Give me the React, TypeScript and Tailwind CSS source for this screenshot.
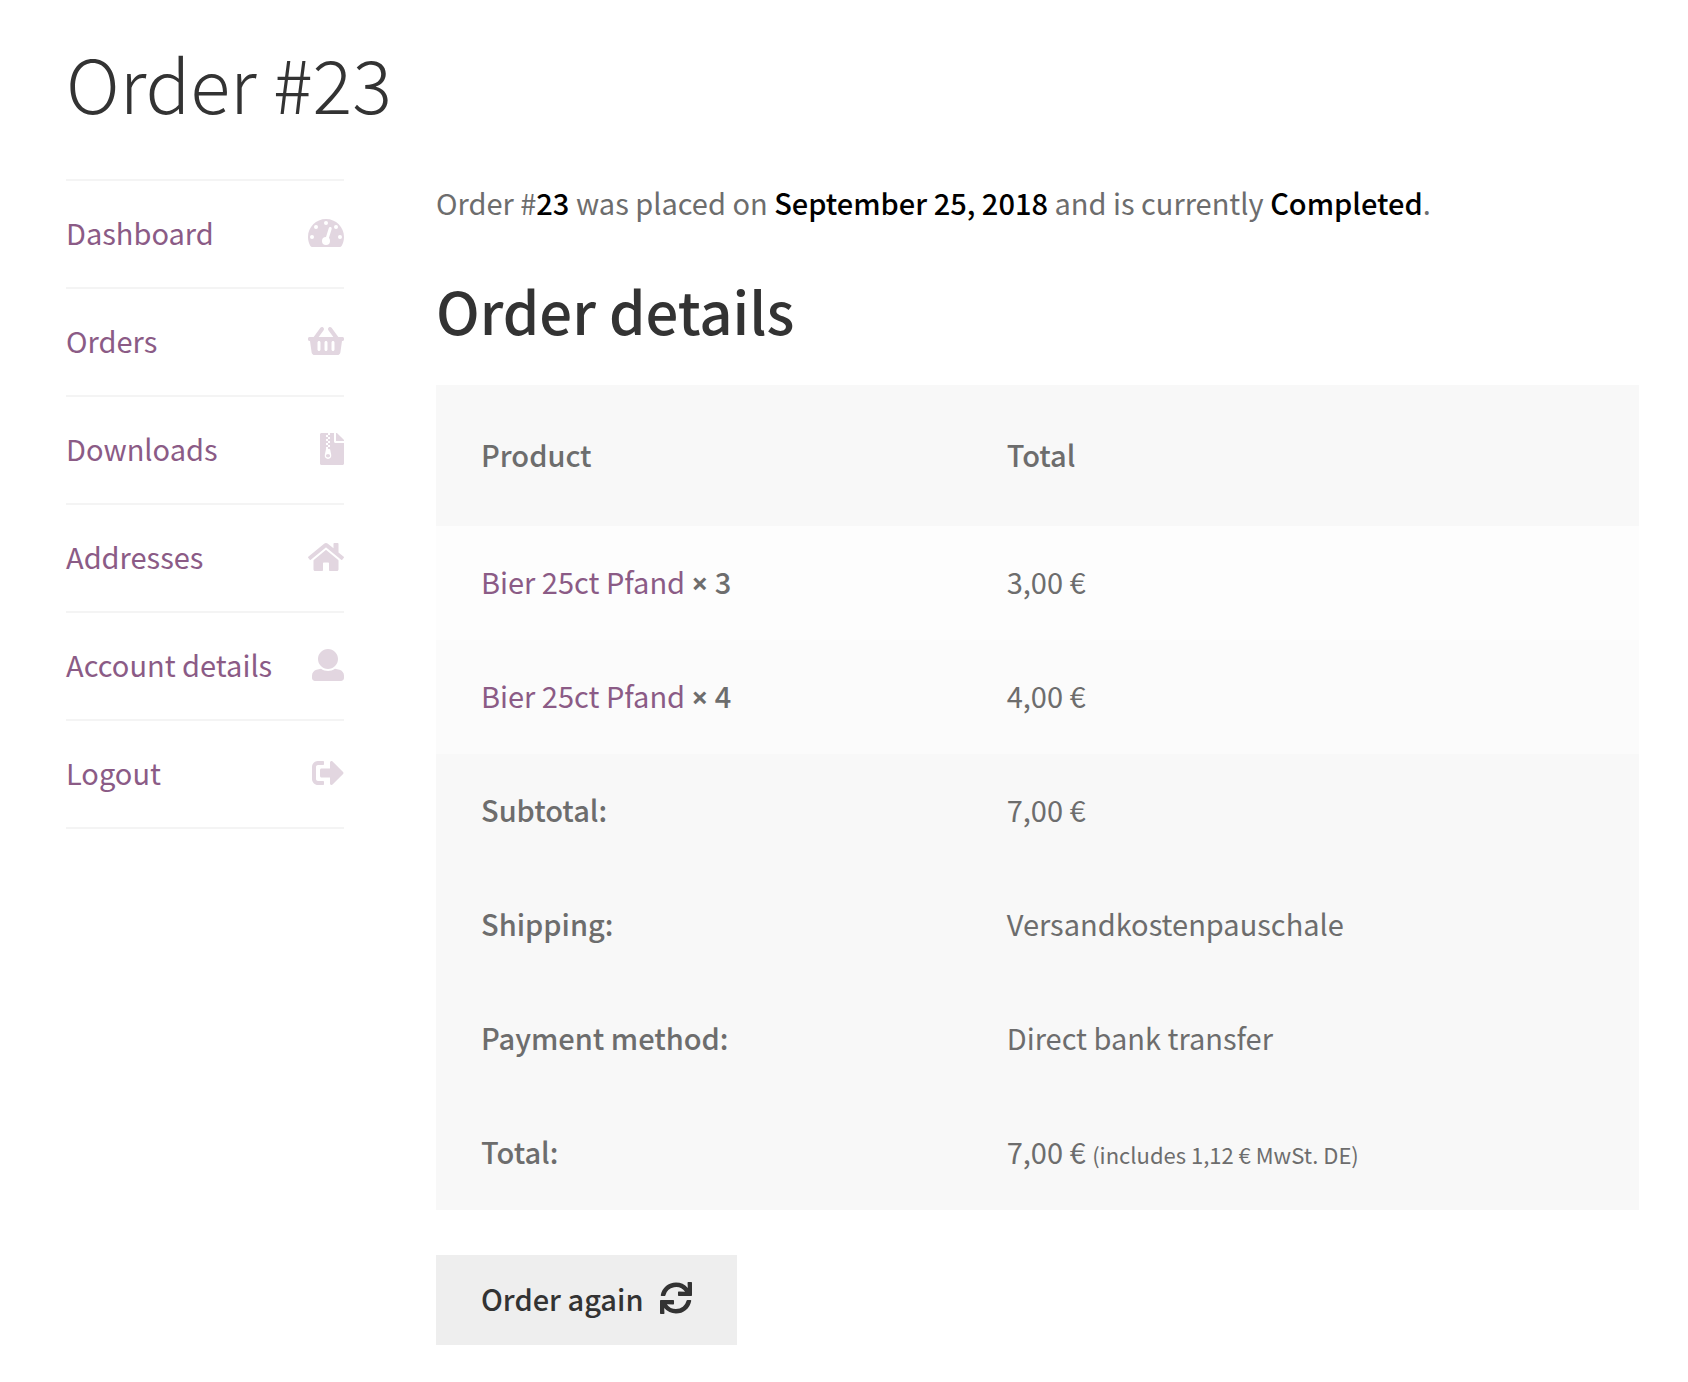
import type { ReactNode } from "react";
import { FaFileArchive, FaShoppingBasket, FaSignOutAlt, FaSync } from "react-icons/fa";

function GaugeIcon() {
  return (
    <svg viewBox="0 0 576 512" className="h-8 w-9" aria-hidden="true">
      <path
        fill="currentColor"
        d="M288 32C128.940 32 0 160.940 0 320c0 52.800 14.250 102.260 39.060 144.800 5.610 9.620 16.300 15.200 27.440 15.200h443c11.140 0 21.830-5.580 27.440-15.200C561.750 422.260 576 372.800 576 320c0-159.060-128.940-288-288-288z"
      />
      <g fill="white">
        <circle cx="288" cy="96" r="32" />
        <circle cx="128" cy="160" r="32" />
        <circle cx="448" cy="160" r="32" />
        <circle cx="64" cy="320" r="32" />
        <circle cx="512" cy="320" r="32" />
        <circle cx="288" cy="384" r="64" />
      </g>
      <path d="M356 184L296 376" stroke="white" strokeWidth="48" strokeLinecap="round" />
    </svg>
  );
}

function HomeIcon() {
  return (
    <svg viewBox="0 0 576 512" className="h-8 w-9" aria-hidden="true">
      <path
        fill="currentColor"
        d="M488 312.7V456c0 13.3-10.7 24-24 24H348c-6.600 0-12-5.400-12-12V356c0-6.600-5.400-12-12-12h-72c-6.600 0-12 5.400-12 12v112c0 6.600-5.400 12-12 12H112c-13.300 0-24-10.700-24-24V312.700c0-3.600 1.600-7 4.400-9.300l188-154.800c4.400-3.600 10.800-3.600 15.300 0l188 154.800c2.700 2.300 4.300 5.700 4.300 9.300zm83.600-60.900L488 182.900V44.400c0-6.600-5.400-12-12-12h-56c-6.600 0-12 5.400-12 12V117l-89.500-73.700c-17.700-14.600-43.300-14.600-61 0L4.400 251.800c-5.100 4.200-5.800 11.800-1.600 16.900l25.500 31c4.200 5.100 11.800 5.800 16.900 1.600l235.200-193.700c4.400-3.600 10.800-3.600 15.300 0l235.200 193.700c5.100 4.200 12.700 3.500 16.900-1.600l25.500-31c4.200-5.200 3.400-12.700-1.700-16.900z"
      />
    </svg>
  );
}

function UserIcon() {
  return (
    <svg viewBox="0 0 512 512" className="size-8" aria-hidden="true">
      <path
        fill="currentColor"
        d="M256 0c88.366 0 160 71.634 160 160s-71.634 160-160 160S96 248.366 96 160 167.634 0 256 0zm183.283 333.821l-71.313-17.828c-74.923 53.890-165.738 41.864-223.940 0l-71.313 17.828C29.981 344.505 0 382.903 0 426.955V464c0 26.510 21.490 48 48 48h416c26.510 0 48-21.490 48-48v-37.045c0-44.052-29.981-82.450-72.717-93.134z"
      />
    </svg>
  );
}

const navigation: { label: string; icon: ReactNode }[] = [
  { label: "Dashboard", icon: <GaugeIcon /> },
  { label: "Orders", icon: <FaShoppingBasket className="h-8 w-9" /> },
  { label: "Downloads", icon: <FaFileArchive className="h-8 w-6" /> },
  { label: "Addresses", icon: <HomeIcon /> },
  { label: "Account details", icon: <UserIcon /> },
  { label: "Logout", icon: <FaSignOutAlt className="size-8" /> },
];

const items = [
  { name: "Bier 25ct Pfand", quantity: 3, total: "3,00 €", shade: "bg-[#fdfdfd]" },
  { name: "Bier 25ct Pfand", quantity: 4, total: "4,00 €", shade: "bg-[#fbfbfb]" },
];

const totals: { label: string; value: string; note?: string }[] = [
  { label: "Subtotal:", value: "7,00 €" },
  { label: "Shipping:", value: "Versandkostenpauschale" },
  { label: "Payment method:", value: "Direct bank transfer" },
  { label: "Total:", value: "7,00 €", note: "(includes 1,12 € MwSt. DE)" },
];

export default function App() {
  return (
    <div className="min-h-screen bg-white pt-9 pr-[49px] pb-9 pl-[66px] font-['Noto_Sans_CJK_SC','Source_Sans_Pro',sans-serif] text-[29px] leading-[52px] text-[#6d6d6d]">
      <h1 className="text-[74px] leading-[91px] font-light text-[#333333]">Order #23</h1>
      <div className="mt-13 flex items-start gap-[92px]">
        <nav aria-label="Account" className="w-[278px] shrink-0">
          <ul className="border-t-2 border-[#f4f4f4]">
            {navigation.map(({ label, icon }) => (
              <li key={label} className="border-b-2 border-[#f4f4f4]">
                <a href="#" className="flex items-center justify-between pt-[25px] pb-[29px] text-[#8b5b86]">
                  {label}
                  <span className="pt-0.5 text-[#e2d6e0]">{icon}</span>
                </a>
              </li>
            ))}
          </ul>
        </nav>

        <main className="min-w-0 flex-1">
          <p className="leading-[46px]">
            Order #<strong className="font-medium text-black">23</strong> was placed on{" "}
            <strong className="font-medium text-black">September 25, 2018</strong> and is currently{" "}
            <strong className="font-medium text-black">Completed</strong>.
          </p>
          <h2 className="mt-[47px] text-[58px] leading-[76px] font-medium text-[#333333]">Order details</h2>
          <table className="mt-[37px] w-full table-fixed bg-[#f8f8f8] text-left">
            <colgroup>
              <col className="w-[43.7%]" />
              <col />
            </colgroup>
            <thead>
              <tr>
                <th className="px-[45px] pt-[43px] pb-[46px] font-medium">Product</th>
                <th className="px-[45px] pt-[43px] pb-[46px] font-medium">Total</th>
              </tr>
            </thead>
            <tbody>
              {items.map(({ name, quantity, total, shade }) => (
                <tr key={quantity} className={shade}>
                  <td className="px-[45px] pt-[29px] pb-[33px]">
                    <a href="#" className="text-[#8b5b86]">{name}</a>{" "}
                    <strong className="font-medium">
                      <span className="font-['Open_Sans',sans-serif] leading-none font-bold">×</span> {quantity}
                    </strong>
                  </td>
                  <td className="px-[45px] pt-[29px] pb-[33px]">{total}</td>
                </tr>
              ))}
            </tbody>
            <tfoot>
              {totals.map(({ label, value, note }) => (
                <tr key={label}>
                  <th scope="row" className="px-[45px] pt-[29px] pb-[33px] font-medium">{label}</th>
                  <td className="px-[45px] pt-[29px] pb-[33px]">
                    {value}
                    {note && <>{" "}<small className="text-[22px] leading-none">{note}</small></>}
                  </td>
                </tr>
              ))}
            </tfoot>
          </table>
          <button type="button" className="mt-[45px] flex h-[90px] items-center gap-4 bg-[#eeeeee] px-[45px] pb-1 font-medium text-[#333333]">
            Order again
            <FaSync className="size-8" />
          </button>
        </main>
      </div>
    </div>
  );
}
